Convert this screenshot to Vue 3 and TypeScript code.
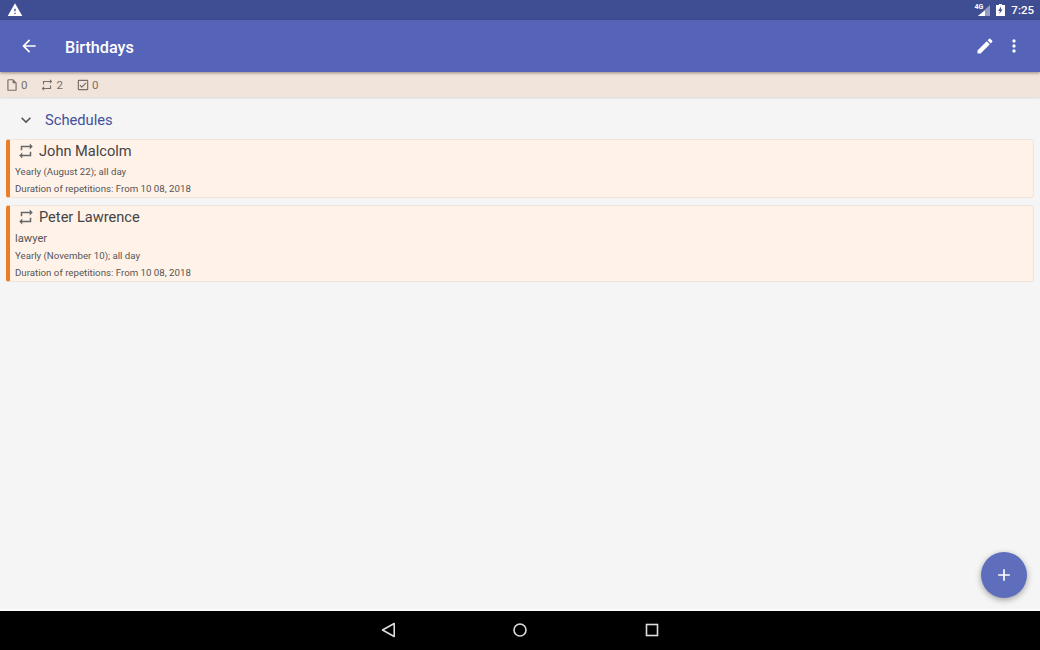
<script setup lang="ts">
// 予定リスト
interface Schedule {
  title: string;
  note?: string;
  lines: string[];
}

const schedules: Schedule[] = [
  {
    title: "John Malcolm",
    lines: ["Yearly (August 22); all day", "Duration of repetitions: From 10 08, 2018"]
  },
  {
    title: "Peter Lawrence",
    note: "lawyer",
    lines: ["Yearly (November 10); all day", "Duration of repetitions: From 10 08, 2018"]
  }
];

const repeatPath = "M7 7h10v3l4-4-4-4v3H5v6h2V7zm10 10H7v-3l-4 4 4 4v-3h12v-6h-2v4z";
</script>

<template>
  <div class="screen">
    <div class="status">
      <svg class="warn" width="16" height="16" viewBox="0 0 24 24"><path d="M1 21h22L12 2 1 21zm12-3h-2v-2h2v2zm0-4h-2v-4h2v4z" fill="#fff" /></svg>
      <div class="status-right">
        <span class="net">4G</span>
        <svg width="12" height="11" viewBox="0 0 12 11"><path d="M12 0v11H0z" fill="#fff" fill-opacity="0.45" /><path d="M7 5.5V11H0z" fill="#fff" /></svg>
        <svg class="batt" width="9" height="12" viewBox="0 0 9 12"><path d="M3 0h3v1h3v11H0V1h3z" fill="#fff" /><path d="M5 2.5 2.2 7H4l-.8 3L6.6 5.4H5z" fill="#3f4d93" /></svg>
        <span class="time">7:25</span>
      </div>
    </div>

    <header class="toolbar">
      <svg class="back" width="20" height="20" viewBox="0 0 24 24"><path d="M20 11H7.83l5.59-5.59L12 4l-8 8 8 8 1.41-1.41L7.83 13H20v-2z" fill="#fff" /></svg>
      <h1>Birthdays</h1>
      <svg class="edit" width="20" height="20" viewBox="0 0 24 24"><path d="M3 17.25V21h3.75L17.81 9.94l-3.75-3.75L3 17.25zM20.71 7.04a1 1 0 0 0 0-1.41l-2.34-2.34a1 1 0 0 0-1.41 0l-1.83 1.83 3.75 3.75 1.83-1.83z" fill="#fff" /></svg>
      <svg class="more" width="20" height="20" viewBox="0 0 24 24"><path d="M12 8a2 2 0 1 0 0-4 2 2 0 0 0 0 4zm0 2a2 2 0 1 0 0 4 2 2 0 0 0 0-4zm0 6a2 2 0 1 0 0 4 2 2 0 0 0 0-4z" fill="#fff" /></svg>
    </header>

    <div class="counts">
      <span class="count">
        <svg width="14" height="14" viewBox="0 0 24 24"><path d="M14 2H6a2 2 0 0 0-2 2v16a2 2 0 0 0 2 2h12a2 2 0 0 0 2-2V8l-6-6zm4 18H6V4h7v5h5v11z" fill="#7a6f67" /></svg>
        0
      </span>
      <span class="count">
        <svg width="14" height="14" viewBox="0 0 24 24"><path :d="repeatPath" fill="#7a6f67" /></svg>
        2
      </span>
      <span class="count">
        <svg width="14" height="14" viewBox="0 0 24 24"><path d="M19 3H5a2 2 0 0 0-2 2v14a2 2 0 0 0 2 2h14a2 2 0 0 0 2-2V5a2 2 0 0 0-2-2zm0 16H5V5h14v14zM17.99 9l-1.41-1.42-6.59 6.59-2.58-2.57-1.42 1.41 4 3.99L17.99 9z" fill="#7a6f67" /></svg>
        0
      </span>
    </div>

    <main class="content">
      <div class="section">
        <svg width="20" height="20" viewBox="0 0 24 24"><path d="M7.41 8.59 12 13.17l4.59-4.58L18 10l-6 6-6-6z" fill="#555" /></svg>
        <span>Schedules</span>
      </div>

      <div v-for="item in schedules" :key="item.title" class="card">
        <div class="card-head">
          <svg width="18" height="18" viewBox="0 0 24 24"><path :d="repeatPath" fill="#666" /></svg>
          <span>{{ item.title }}</span>
        </div>
        <div v-if="item.note" class="note">{{ item.note }}</div>
        <div v-for="(line, i) in item.lines" :key="i" class="line">{{ line }}</div>
      </div>

      <button class="fab">
        <svg width="20" height="20" viewBox="0 0 24 24"><path d="M19 13h-6v6h-2v-6H5v-2h6V5h2v6h6v2z" fill="#fff" /></svg>
      </button>
    </main>

    <nav class="navbar">
      <svg width="18" height="18" viewBox="0 0 18 18"><path d="M15.2 2.5v13L3.5 9z" fill="none" stroke="#ddd" stroke-width="1.6" stroke-linejoin="round" /></svg>
      <svg width="18" height="18" viewBox="0 0 18 18"><circle cx="9" cy="9" r="6" fill="none" stroke="#ddd" stroke-width="1.6" /></svg>
      <svg width="18" height="18" viewBox="0 0 18 18"><rect x="3.5" y="3.5" width="11" height="11" fill="none" stroke="#ddd" stroke-width="1.6" /></svg>
    </nav>
  </div>
</template>

<style scoped>
.screen {
  width: 1040px;
  height: 650px;
  display: flex;
  flex-direction: column;
  overflow: hidden;
  background: #f5f5f5;
  font-family: Roboto, "Liberation Sans", sans-serif;
}

.status {
  height: 20px;
  flex: none;
  display: flex;
  align-items: center;
  justify-content: space-between;
  padding: 0 6px 0 7px;
  background: #3f4d93;
  color: #fff;
}

.status-right {
  display: flex;
  align-items: center;
}

.net {
  font-size: 7px;
  font-weight: 700;
  margin-right: -5px;
  margin-top: -6px;
}

.batt {
  margin-left: 6px;
}

.time {
  font-size: 11.5px;
  font-weight: 500;
  margin-left: 6px;
}

.toolbar {
  height: 52px;
  flex: none;
  display: flex;
  align-items: center;
  padding: 0 16px 0 19px;
  background: #5563b9;
  box-shadow: 0 1px 3px rgba(0, 0, 0, 0.4);
  position: relative;
  color: #fff;
}

.toolbar h1 {
  flex: 1;
  margin: 2px 0 0 26px;
  font-size: 16.2px;
  font-weight: 500;
}

.more {
  margin-left: 9px;
}

.counts {
  height: 25px;
  flex: none;
  display: flex;
  align-items: center;
  gap: 13px;
  padding: 1px 0 0 5px;
  box-sizing: border-box;
  background: #f1e4da;
  color: #7a6f67;
  font-size: 11.5px;
  box-shadow: 0 1px 2px rgba(0, 0, 0, 0.12);
}

.count {
  display: flex;
  align-items: center;
  gap: 2px;
}

.content {
  flex: 1;
  position: relative;
  padding: 0 6px;
  border-bottom: 2px solid #fbfbfb;
}

.section {
  height: 42px;
  display: flex;
  align-items: center;
  gap: 9px;
  padding: 3px 0 0 10px;
  box-sizing: border-box;
  color: #43509c;
  font-size: 14.7px;
}

.card {
  background: #fff2e9;
  border: 1px solid #efe5dc;
  border-left: 4px solid #ed7d25;
  border-radius: 3px;
  padding: 0 0 0 5px;
  margin-bottom: 7px;
  box-sizing: border-box;
  color: #555;
}

.card-head {
  display: flex;
  align-items: center;
  gap: 4px;
  height: 22px;
  font-size: 14.6px;
  color: #444;
  padding-left: 2px;
}

.note {
  font-size: 11.2px;
  line-height: 18px;
  margin-top: 2px;
}

.line {
  font-size: 9.7px;
  line-height: 16.5px;
}

.card-head + .line {
  margin-top: 2px;
}

.fab {
  position: absolute;
  right: 13px;
  bottom: 11px;
  width: 46px;
  height: 46px;
  border: 0;
  border-radius: 50%;
  padding: 0;
  display: flex;
  align-items: center;
  justify-content: center;
  background: #5f6dbd;
  box-shadow: 0 2px 6px rgba(0, 0, 0, 0.35);
}

.navbar {
  height: 39px;
  flex: none;
  display: flex;
  align-items: center;
  justify-content: center;
  gap: 114px;
  padding-bottom: 1px;
  box-sizing: border-box;
  background: #000;
}
</style>
<style>
html,
body {
  margin: 0;
}
</style>
